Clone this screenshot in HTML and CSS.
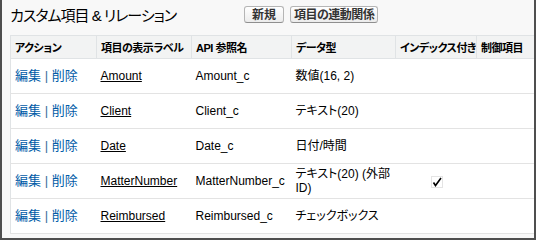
FILE: index.html
```html
<!DOCTYPE html>
<html lang="ja">
<head>
    <meta charset="UTF-8">
    <title>カスタム項目 &amp; リレーション</title>
    <link rel="stylesheet" href="styles.css">
</head>
<body>
    <div class="block">
        <div class="block-header">
            <h2 class="title">カスタム項目 &amp; リレーション</h2>
            <div class="buttons">
                <button class="btn">新規</button>
                <button class="btn btn-long">項目の連動関係</button>
            </div>
        </div>

        <div class="list-wrap">
            <table class="list">
                <colgroup>
                    <col class="c-action">
                    <col class="c-label">
                    <col class="c-api">
                    <col class="c-type">
                    <col class="c-index">
                    <col class="c-ctrl">
                </colgroup>
                <thead>
                    <tr class="head">
                        <th>アクション</th>
                        <th>項目の表示ラベル</th>
                        <th>API 参照名</th>
                        <th>データ型</th>
                        <th>インデックス付き</th>
                        <th>制御項目</th>
                    </tr>
                </thead>
                <tbody>
                    <tr>
                        <td class="actions"><a href="#">編集</a> <span class="sep">|</span> <a href="#">削除</a></td>
                        <td><a class="field" href="#">Amount</a></td>
                        <td>Amount_c</td>
                        <td>数値(16, 2)</td>
                        <td></td>
                        <td></td>
                    </tr>
                    <tr>
                        <td class="actions"><a href="#">編集</a> <span class="sep">|</span> <a href="#">削除</a></td>
                        <td><a class="field" href="#">Client</a></td>
                        <td>Client_c</td>
                        <td>テキスト(20)</td>
                        <td></td>
                        <td></td>
                    </tr>
                    <tr>
                        <td class="actions"><a href="#">編集</a> <span class="sep">|</span> <a href="#">削除</a></td>
                        <td><a class="field" href="#">Date</a></td>
                        <td>Date_c</td>
                        <td>日付/時間</td>
                        <td></td>
                        <td></td>
                    </tr>
                    <tr>
                        <td class="actions"><a href="#">編集</a> <span class="sep">|</span> <a href="#">削除</a></td>
                        <td><a class="field" href="#">MatterNumber</a></td>
                        <td>MatterNumber_c</td>
                        <td>テキスト(20) (外部ID)</td>
                        <td class="check">
                            <svg width="12" height="12" viewBox="0 0 12 12">
                                <rect x="0.5" y="0.5" width="11" height="11" fill="none" stroke="#c8c8c8" stroke-width="1" stroke-dasharray="1 1"/>
                                <path d="M2.5 6.5 L4.5 9.5 L10 2" fill="none" stroke="#000" stroke-width="1.6"/>
                            </svg>
                        </td>
                        <td></td>
                    </tr>
                    <tr>
                        <td class="actions"><a href="#">編集</a> <span class="sep">|</span> <a href="#">削除</a></td>
                        <td><a class="field" href="#">Reimbursed</a></td>
                        <td>Reimbursed_c</td>
                        <td>チェックボックス</td>
                        <td></td>
                        <td></td>
                    </tr>
                </tbody>
            </table>
        </div>
    </div>
</body>
</html>
```

FILE: styles.css
```css
body {
    margin: 0;
    font-family: "Liberation Sans", "Noto Sans CJK JP", sans-serif;
    font-size: 12px;
    color: #000;
    font-feature-settings: "palt";
}
.block {
    width: 536px;
    height: 240px;
    box-sizing: border-box;
    background-color: #f8f8f8;
    border: 2px solid #4f4f4f;
    border-top: none;
    padding-left: 8px;
    overflow: hidden;
}
.block-header {
    display: flex;
    align-items: center;
    height: 29px;
    padding-bottom: 6px;
}
.title {
    width: 234px;
    margin: 0;
    font-size: 15px;
    font-weight: normal;
    letter-spacing: -1px;
}
.buttons {
    display: flex;
    gap: 6px;
}
.btn {
    font-family: inherit;
    font-feature-settings: "palt";
    font-size: 12px;
    font-weight: bold;
    color: #333;
    height: 17px;
    padding: 0 7px;
    line-height: 14px;
    border: 1px solid #b5b5b5;
    border-bottom-color: #8f8f8f;
    border-radius: 3px;
    background: linear-gradient(#ffffff, #ececec);
}
.btn-long {
    padding: 0 3px;
    letter-spacing: -0.5px;
}
.list-wrap {
    width: 524px;
    overflow: hidden;
}
.list {
    width: 528px;
    table-layout: fixed;
    border-collapse: collapse;
    background-color: #fff;
    border: 1px solid #e0e3e5;
}
.c-action { width: 86px; }
.c-label { width: 95px; }
.c-api { width: 100px; }
.c-type { width: 104px; }
.c-index { width: 81px; }
.c-ctrl { width: 62px; }
.head {
    height: 23px;
    background-color: #f2f3f3;
}
.head th {
    text-align: left;
    font-size: 11px;
    font-weight: bold;
    letter-spacing: -0.5px;
    padding: 0 1px 0 4px;
    border-right: 1px solid #e0e3e5;
    border-bottom: 1px solid #e0e3e5;
    white-space: nowrap;
    overflow: hidden;
}
.list tbody tr {
    height: 35px;
    border-bottom: 1px solid #e3e3e3;
}
.list td {
    padding: 2px 2px 2px 4px;
    line-height: 14px;
    vertical-align: middle;
}
.actions {
    font-size: 13px;
}
.actions a {
    color: #015ba7;
    text-decoration: none;
}
.sep {
    color: #3c6e9c;
}
.field {
    color: #000;
    text-decoration: underline;
}
.check {
    text-align: center;
}
.check svg {
    display: inline-block;
    vertical-align: middle;
}
```
